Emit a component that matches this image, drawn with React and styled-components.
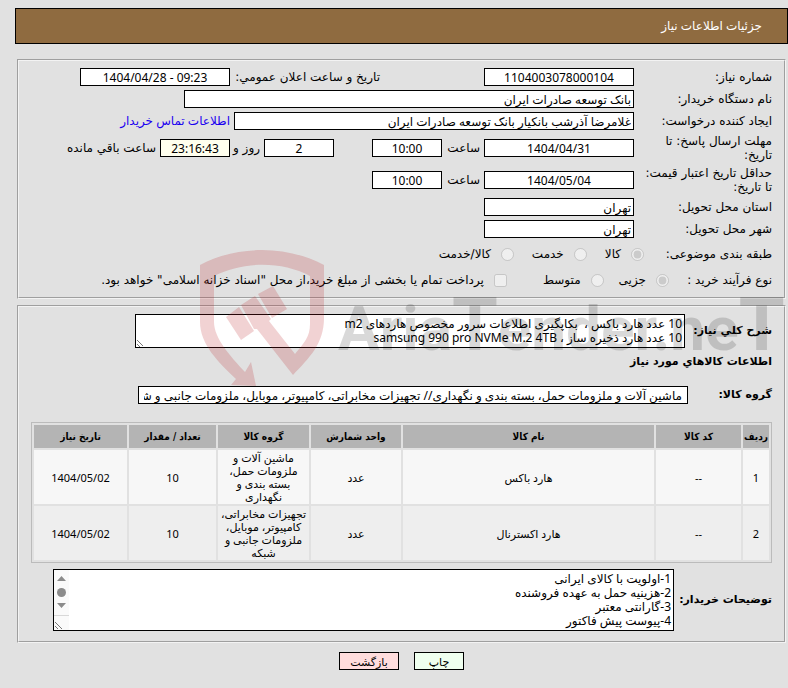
import React from "react";
import styled, { createGlobalStyle } from "styled-components";

const fieldFont = `"Noto Sans", "DejaVu Sans", Tahoma, sans-serif`;

const GlobalStyle = createGlobalStyle`
  * {
    box-sizing: border-box;
  }
  body {
    margin: 0;
    background-color: #e1e1e1;
    color: #000000;
    font-family: "DejaVu Sans", Tahoma, sans-serif;
    font-size: 12px;
    line-height: 14px;
  }
  input, textarea, button {
    font-family: ${fieldFont};
    font-size: 12px;
    color: inherit;
  }
`;

const Page = styled.div`
  position: relative;
  overflow: hidden;
  padding: 8px 0 18px 15px;
`;

const Header = styled.h1`
  display: flex;
  align-items: center;
  height: 36px;
  margin: 0 0 15px;
  padding: 0 25px;
  border: 1px solid #000000;
  background-color: #8f6b40;
  color: #ffffff;
  font-family: ${fieldFont};
  font-size: 12px;
  font-weight: normal;
`;

const Panel = styled.section`
  margin: 0 2px 6px;
  padding: ${(props) => props.$padding};
  border: 2px groove #f3f3f3;
`;

const Row = styled.div`
  display: flex;
  align-items: center;
  gap: ${(props) => props.$gap || 4}px;
  min-height: ${(props) => props.$height || 22}px;
`;

const Label = styled.label`
  flex: none;
  width: ${(props) => (props.$width ? `${props.$width}px` : "auto")};
  font-size: ${(props) => (props.$bold ? 11 : 12)}px;
  font-weight: ${(props) => (props.$bold ? "bold" : "normal")};
  white-space: nowrap;
`;

const Unit = styled.span`
  flex: none;
  width: ${(props) => (props.$width ? `${props.$width}px` : "auto")};
  white-space: nowrap;
`;

const Spacer = styled.span`
  flex: none;
  width: ${(props) => props.$width}px;
`;

const Input = styled.input`
  flex: 0 1 ${(props) => props.$width}px;
  min-width: 0;
  height: 18px;
  padding: 0 ${(props) => props.$pad || 2}px;
  border: 1px solid #000000;
  background-color: ${(props) => (props.$highlight ? "#ffffee" : "#ffffff")};
  text-align: ${(props) => (props.$center ? "center" : "right")};
  outline: none;
`;

const Link = styled.a`
  color: #1a00f0;
  font-family: ${fieldFont};
  text-decoration: none;
  white-space: nowrap;
`;

const Option = styled.label`
  display: flex;
  align-items: center;
  gap: 10px;
  white-space: nowrap;

  input {
    width: 13px;
    height: 13px;
    margin: 0;
  }
`;

const Heading = styled.h2`
  margin: 0;
  font-size: 11px;
  line-height: 28px;
`;

const AreaBox = styled.div`
  position: relative;
  flex: 0 1 ${(props) => props.$width}px;
  height: ${(props) => props.$height}px;
`;

const TextArea = styled.textarea`
  display: block;
  width: 100%;
  height: 100%;
  padding: 2px;
  border: 1px solid #000000;
  background-color: #ffffff;
  line-height: 14px;
  overflow: hidden;
  resize: none;
  outline: none;
`;

const Grip = styled.svg`
  position: absolute;
  left: 1px;
  bottom: 1px;
`;

const Table = styled.table`
  width: 100%;
  margin-top: 8px;
  table-layout: fixed;
  border: 1px solid #bbbbbb;
  border-spacing: 2px;
  font-size: 11px;
  line-height: 13px;
  text-align: center;

  th {
    height: 23px;
    padding: 0;
    background-color: #b4b4b4;
    font-family: "DejaVu Sans Condensed", "DejaVu Sans", sans-serif;
    font-size: 10px;
    white-space: nowrap;
  }
  td {
    height: 54px;
    padding: 1px 0;
    background-color: #f7f7f7;
    font-family: ${fieldFont};
  }
  tbody tr:nth-child(even) td {
    background-color: #eeeeee;
  }
`;

const Col = styled.col`
  width: ${(props) => (props.$width ? `${props.$width}px` : "auto")};
`;

const GroupLine = styled.span`
  display: block;
  white-space: nowrap;
`;

const Actions = styled.div`
  display: flex;
  justify-content: center;
  gap: 15px;
  margin: 9px 2px 0;
`;

const Button = styled.button`
  width: ${(props) => props.$width}px;
  height: 18px;
  padding: 0;
  border: 1px solid #000000;
  background-color: ${(props) => props.$color};
  font-size: 11px;
  cursor: pointer;
`;

const Watermark = styled.svg`
  position: absolute;
  top: 240px;
  left: 190px;
  direction: ltr;
  pointer-events: none;

  text {
    font-family: Roboto, "Liberation Sans", sans-serif;
    font-size: 62px;
    font-weight: bold;
  }
`;

const goods = [
  {
    id: 1,
    code: "--",
    name: "هارد باکس",
    unit: "عدد",
    group: ["ماشین آلات و", "ملزومات حمل،", "بسته بندی و", "نگهداری"],
    count: "10",
    date: "1404/05/02",
  },
  {
    id: 2,
    code: "--",
    name: "هارد اکسترنال",
    unit: "عدد",
    group: ["تجهیزات مخابراتی،", "کامپیوتر، موبایل،", "ملزومات جانبی و", "شبکه"],
    count: "10",
    date: "1404/05/02",
  },
];

const description =
  "10 عدد هارد باکس ،  بکاپگیری اطلاعات سرور مخصوص هاردهای m2\n10 عدد هارد ذخیره ساز ، samsung 990 pro NVMe M.2 4TB";

const notes =
  "1-اولویت با کالای ایرانی\n2-هزینیه حمل به عهده فروشنده\n3-گارانتی معتبر\n4-پیوست پیش فاکتور";

const Logo = () => (
  <Watermark width="598" height="160" aria-hidden="true">
    <g fill="#b91c24" fillOpacity="0.2">
      <path d="M10 25 C48 5 96 5 134 25 V78 C134 104 119 118 103 135 L67 89 L64 89 L51 65 L65 56 L81 79 L79 81 L105 114 C114 103 120 97 120 84 V36 C92 21 54 21 24 36 V82 C24 98 40 116 55 132 L61 122 L66 146 L41 145 L46 139 C28 122 10 104 10 82 Z" />
      <path d="M36 77 L49 67 L64 91 L51 100 Z" />
      <path d="M68 54 L83 46 L97 69 L82 78 Z" />
    </g>
    <text x="148" y="110" fill="#000000" fillOpacity="0.15">
      Aria<tspan fontSize="74">T</tspan>ender.ne<tspan fontSize="74">T</tspan>
    </text>
  </Watermark>
);

const App = () => {
  return (
    <Page dir="rtl">
      <GlobalStyle />
      <Header>جزئیات اطلاعات نیاز</Header>

      <Panel $padding="5px 12px">
        <Row>
          <Label htmlFor="number" $width={134}>شماره نیاز:</Label>
          <Input id="number" $width={150} $center readOnly value="1104003078000104" />
          <Spacer $width={96} />
          <Label htmlFor="announce" $width={146}>تاریخ و ساعت اعلان عمومي:</Label>
          <Input id="announce" $width={150} $center readOnly dir="ltr" value="1404/04/28 - 09:23" />
        </Row>
        <Row>
          <Label htmlFor="buyer" $width={134}>نام دستگاه خریدار:</Label>
          <Input id="buyer" $width={450} readOnly value="بانک توسعه صادرات ایران" />
        </Row>
        <Row>
          <Label htmlFor="creator" $width={134}>ایجاد کننده درخواست:</Label>
          <Input id="creator" $width={400} readOnly value="غلامرضا آذرشب بانکیار بانک توسعه صادرات ایران" />
          <Link href="#contact">اطلاعات تماس خریدار</Link>
        </Row>
        <Row $height={32}>
          <Label htmlFor="deadline" $width={134}>مهلت ارسال پاسخ: تا<br />تاریخ:</Label>
          <Input id="deadline" $width={150} $center readOnly value="1404/04/31" />
          <Unit $width={34}>ساعت</Unit>
          <Input aria-label="ساعت" $width={70} $center readOnly value="10:00" />
          <Spacer $width={30} />
          <Input aria-label="روز" $width={70} $center readOnly value="2" />
          <Unit $width={26}>روز و</Unit>
          <Input aria-label="باقي مانده" $width={70} $center $highlight readOnly value="23:16:43" />
          <Unit>ساعت باقي مانده</Unit>
        </Row>
        <Row $height={32}>
          <Label htmlFor="validity" $width={134}>حداقل تاریخ اعتبار قیمت:<br />تا تاریخ:</Label>
          <Input id="validity" $width={150} $center readOnly value="1404/05/04" />
          <Unit $width={34}>ساعت</Unit>
          <Input aria-label="ساعت" $width={70} $center readOnly value="10:00" />
        </Row>
        <Row>
          <Label htmlFor="province" $width={134}>استان محل تحویل:</Label>
          <Input id="province" $width={150} readOnly value="تهران" />
        </Row>
        <Row>
          <Label htmlFor="city" $width={134}>شهر محل تحویل:</Label>
          <Input id="city" $width={150} readOnly value="تهران" />
        </Row>
        <Row $gap={18} $height={28}>
          <Unit $width={110}>طبقه بندی موضوعی:</Unit>
          <Option><input type="radio" name="category" disabled defaultChecked />کالا</Option>
          <Option><input type="radio" name="category" disabled />خدمت</Option>
          <Option><input type="radio" name="category" disabled />کالا/خدمت</Option>
        </Row>
        <Row $gap={15} $height={24}>
          <Unit $width={88}>نوع فرآیند خرید :</Unit>
          <Option><input type="radio" name="process" disabled defaultChecked />جزیی</Option>
          <Option><input type="radio" name="process" disabled />متوسط</Option>
          <Spacer $width={6} />
          <Option><input type="checkbox" disabled />پرداخت تمام یا بخشی از مبلغ خرید،از محل "اسناد خزانه اسلامی" خواهد بود.</Option>
        </Row>
      </Panel>

      <Panel $padding="7px 12px 4px">
        <Row $height={34}>
          <Label htmlFor="description" $bold $width={83}>شرح كلي نیاز:</Label>
          <AreaBox $width={550} $height={34}>
            <TextArea id="description" readOnly value={description} />
            <Grip width="8" height="8" stroke="#777777" fill="none">
              <path d="M1 1 L7 7 M1 5 L4 8" />
            </Grip>
          </AreaBox>
        </Row>
        <Heading>اطلاعات كالاهاي مورد نیاز</Heading>
        <Row $height={38}>
          <Label htmlFor="group" $bold $width={80}>گروه کالا:</Label>
          <Input
            id="group"
            $width={550}
            $pad={5}
            readOnly
            value="ماشین آلات و ملزومات حمل، بسته بندی و نگهداری// تجهیزات مخابراتی، کامپیوتر، موبایل، ملزومات جانبی و شبکه"
          />
        </Row>
        <Table>
          <colgroup>
            <Col $width={26} />
            <Col $width={85} />
            <Col />
            <Col $width={90} />
            <Col $width={91} />
            <Col $width={87} />
            <Col $width={93} />
          </colgroup>
          <thead>
            <tr>
              <th>ردیف</th>
              <th>کد کالا</th>
              <th>نام کالا</th>
              <th>واحد شمارش</th>
              <th>گروه کالا</th>
              <th>تعداد / مقدار</th>
              <th>تاریخ نیاز</th>
            </tr>
          </thead>
          <tbody>
            {goods.map((item) => (
              <tr key={item.id}>
                <td>{item.id}</td>
                <td>{item.code}</td>
                <td>{item.name}</td>
                <td>{item.unit}</td>
                <td>
                  {item.group.map((line) => (
                    <GroupLine key={line}>{line}</GroupLine>
                  ))}
                </td>
                <td>{item.count}</td>
                <td>{item.date}</td>
              </tr>
            ))}
          </tbody>
        </Table>
        <Row $height={74}>
          <Label htmlFor="notes" $bold $width={94}>توضیحات خریدار:</Label>
          <AreaBox $width={621} $height={62}>
            <TextArea id="notes" readOnly value={notes} />
            <Grip width="15" height="60">
              <rect width="15" height="60" fill="#fafafa" />
              <path d="M3 11 L7.5 6 L12 11 Z M3 33 L7.5 38 L12 33 Z" fill="#8b8b8b" />
              <circle cx="7.5" cy="22.5" r="4.5" fill="#8b8b8b" />
              <path d="M0 45.5 H15" stroke="#d8d8d8" />
              <path d="M1 52 L8 59 M1 56 L4 59" stroke="#777777" />
            </Grip>
          </AreaBox>
        </Row>
      </Panel>

      <Actions>
        <Button type="button" $width={50} $color="#efffef">چاپ</Button>
        <Button type="button" $width={60} $color="#ffdddd">بازگشت</Button>
      </Actions>

      <Logo />
    </Page>
  );
};

export default App;
